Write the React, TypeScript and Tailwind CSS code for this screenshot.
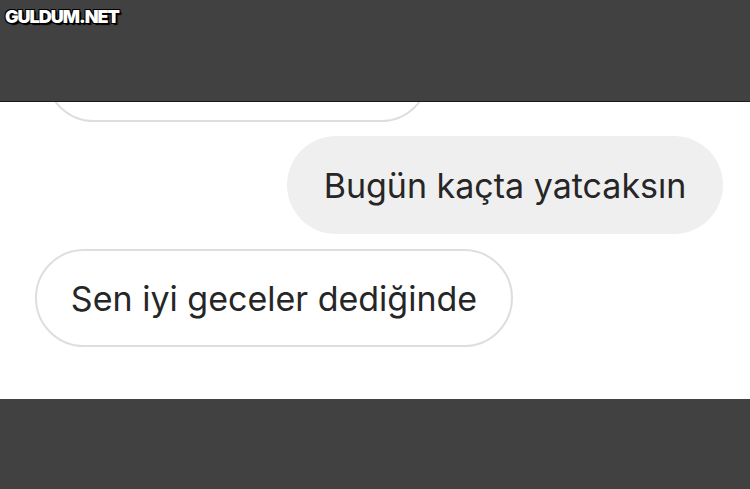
export default function App() {
  return (
    <div className="w-[750px] h-[489px] flex flex-col bg-[#414141] overflow-hidden" style={{ fontFamily: "Inter, 'Liberation Sans', sans-serif" }}>
      <div className="h-[102px] shrink-0 pl-[5px] pt-[3px] border-b border-[#1a1a1a]">
        <span className="text-white text-[18px] font-black tracking-[-1px]" style={{ textShadow: "1px 1px 0 #000, -1px -1px 0 #000, 1px -1px 0 #000, -1px 1px 0 #000, 2px 2px 1px #000" }}>GULDUM.NET</span>
      </div>
      <div className="h-[297px] shrink-0 bg-white overflow-hidden flex flex-col">
        <div className="ml-[45px] mt-[-78px] w-[385px] h-[98px] rounded-full border-2 border-[#dedede]" />
        <div className="flex justify-end pr-[27px] mt-[14px]">
          <div className="h-[98px] w-[436px] rounded-full bg-[#efefef] flex items-center justify-center text-[34px] text-[#262626]">Bugün kaçta yatcaksın</div>
        </div>
        <div className="ml-[35px] mt-[15px] h-[98px] w-[478px] rounded-full border-2 border-[#dedede] flex items-center justify-center text-[34px] text-[#262626]">Sen iyi geceler dediğinde</div>
      </div>
      <div className="flex-1" />
    </div>
  );
}
